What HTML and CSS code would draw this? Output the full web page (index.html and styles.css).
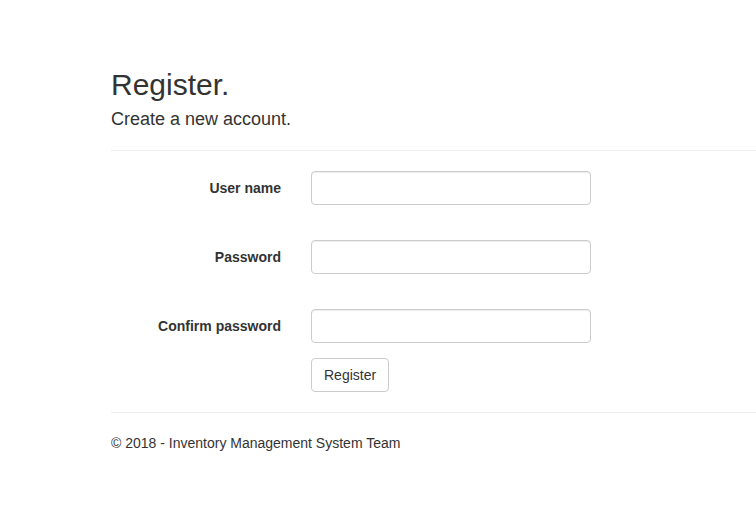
FILE: index.html
```html
<!DOCTYPE html>
<html>
<head>
<meta charset="utf-8">
<title>Register</title>
<link rel="stylesheet" href="styles.css">
</head>
<body>
<div class="container">
  <h2 class="title">Register.</h2>
  <h4 class="subtitle">Create a new account.</h4>
  <hr class="rule">
  <form class="form">
    <div class="form-group">
      <label class="form-label" for="user">User name</label>
      <input class="form-input" id="user" type="text">
    </div>
    <div class="form-group">
      <label class="form-label" for="pass">Password</label>
      <input class="form-input" id="pass" type="password">
    </div>
    <div class="form-group">
      <label class="form-label" for="confirm">Confirm password</label>
      <input class="form-input" id="confirm" type="password">
    </div>
    <div class="form-actions">
      <button class="btn" type="button">Register</button>
    </div>
  </form>
  <hr class="rule">
  <footer class="footer">
    <p class="footer-text">© 2018 - Inventory Management System Team</p>
  </footer>
</div>
</body>
</html>
```
FILE: styles.css
```css
* { box-sizing: border-box; }
html, body { margin: 0; padding: 0; background: #fff; }
body {
  font-family: "Liberation Sans", Arial, sans-serif;
  font-size: 14px;
  line-height: 1.42857;
  color: #333;
}
.container {
  padding: 48px 0 0 111px;
}
.title {
  font-size: 30px;
  font-weight: 500;
  line-height: 1.1;
  margin: 20px 0 8px;
}
.subtitle {
  font-size: 18px;
  font-weight: 500;
  line-height: 1.1;
  padding-top: 1px;
  margin: 0 0 10px;
}
.rule {
  border: 0;
  border-top: 1px solid #eee;
  margin: 20px 0;
}
.form-group {
  display: grid;
  grid-template-columns: 170px 280px;
  column-gap: 30px;
  margin-bottom: 35px;
}
.form-label {
  text-align: right;
  font-weight: bold;
  padding-top: 8px;
}
.form-input {
  height: 34px;
  width: 280px;
  padding: 6px 12px;
  font: inherit;
  color: #555;
  background: #fff;
  border: 1px solid #ccc;
  border-radius: 4px;
  box-shadow: inset 0 1px 1px rgba(0,0,0,.075);
}
.form-actions {
  margin-top: -20px;
  padding-left: 200px;
}
.btn {
  height: 34px;
  padding: 7px 12px 5px;
  font: inherit;
  color: #333;
  background: #fff;
  border: 1px solid #ccc;
  border-radius: 4px;
}
.footer-text {
  padding-top: 1px;
  margin: 0 0 10px;
}
```
